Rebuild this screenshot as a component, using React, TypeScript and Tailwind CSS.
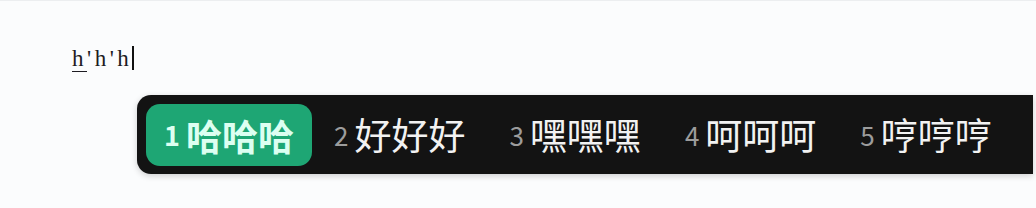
const candidates = [
  { n: 1, text: "哈哈哈" },
  { n: 2, text: "好好好" },
  { n: 3, text: "嘿嘿嘿" },
  { n: 4, text: "呵呵呵" },
  { n: 5, text: "哼哼哼" },
];

const cjk = "'Noto Sans CJK SC', 'Noto Sans', sans-serif";

export default function App() {
  return (
    <div className="h-[208px] w-[1036px] overflow-hidden border-t border-[#eceef0] bg-[#fbfcfd]">
      {/* composing input */}
      <div
        className="ml-[72px] mt-[44px] flex h-[26px] items-center text-[23px] leading-none tracking-[3.5px] text-[#1d1b22]"
        style={{ fontFamily: "'Liberation Serif', serif" }}
      >
        <span className="underline decoration-1 underline-offset-[5px]">h</span>
        <span>'h'h</span>
        <span className="h-[24px] w-[2px] bg-[#111]" />
      </div>

      {/* candidate bar */}
      <div
        className="ml-[137px] mt-[24px] flex h-[79px] w-[896px] items-center rounded-l-[14px] bg-[#131313] pl-[9px] shadow-[0_2px_6px_rgba(0,0,0,0.18)]"
        style={{ fontFamily: cjk }}
      >
        {candidates.map((c) =>
          c.n === 1 ? (
            <div
              key={c.n}
              className="flex h-[62px] w-[166px] items-center gap-[6px] rounded-[14px] bg-[#1ea674] pl-[18px] text-[#dcfff1]"
            >
              <span className="text-[27px] font-bold leading-none">{c.n}</span>
              <span className="text-[36px] font-bold leading-none">{c.text}</span>
            </div>
          ) : (
            <div key={c.n} className="flex items-center gap-[6px] px-[22px]">
              <span className="text-[26px] leading-none text-[#9c9c9c]">{c.n}</span>
              <span className="text-[37px] leading-none text-[#f2f2f2]">{c.text}</span>
            </div>
          ),
        )}
      </div>
    </div>
  );
}
